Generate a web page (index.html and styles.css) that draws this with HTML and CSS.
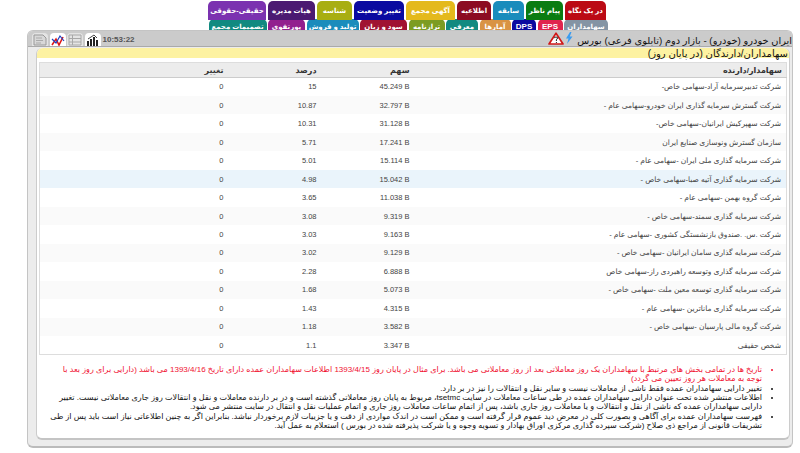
FILE: index.html
```html
<!DOCTYPE html>
<html lang="fa" dir="rtl">
<head>
<meta charset="utf-8">
<title>سهامداران</title>
<link rel="stylesheet" href="styles.css">
</head>
<body>
<nav class="tabs">
  <div class="tab-row top">
    <a class="tab w41 red">در یک نگاه</a>
    <a class="tab w37 green">پیام ناظر</a>
    <a class="tab w31 sky">سابقه</a>
    <a class="tab w34 maroon">اطلاعیه</a>
    <a class="tab w49 gold">آگهی مجمع</a>
    <a class="tab w50 navy">تغییر وضعیت</a>
    <a class="tab w35 olive">شناسه</a>
    <a class="tab w47 plum">هیات مدیره</a>
    <a class="tab w58 violet">حقیقی-حقوقی</a>
  </div>
  <div class="tab-row bottom">
    <a class="tab w44 slate">سهامداران</a>
    <a class="tab w25 crimson latin">EPS</a>
    <a class="tab w24 navy latin">DPS</a>
    <a class="tab w31 orange">آمارها</a>
    <a class="tab w32 teal">معرفی</a>
    <a class="tab w36 moss">ترازنامه</a>
    <a class="tab w47 wine">سود و زیان</a>
    <a class="tab w52 sky">تولید و فروش</a>
    <a class="tab w37 magenta">پورتفوی</a>
    <a class="tab w58 teal">تصمیمات مجمع</a>
  </div>
</nav>
<main class="panel">
  <header class="panel-head">
    <h1 class="title">ایران خودرو (خودرو) - بازار دوم (تابلوی فرعی) بورس</h1>
    <svg class="bolt" viewBox="0 0 8 12" width="8" height="12"><path d="M5 0 1 6.500h2.500L2 12 7.500 4.500H4.800L6.500 0z" fill="#3a9cf0"/></svg>
    <svg class="warn" viewBox="0 0 16 13" width="16" height="13"><path d="M8 1.200 15 12H1z" fill="#fff" stroke="#d01818" stroke-width="1.700" stroke-linejoin="round"/><path d="M6.200 5.800Q8 4 9.800 5.800L8.400 7.800V9M8.400 10v1" fill="none" stroke="#222" stroke-width="1"/></svg>
    <div class="head-spacer"></div>
    <time class="clock">10:53:22</time>
    <div class="tools">
      <span class="tool"><svg viewBox="0 0 14 12" width="14" height="12"><path d="M1 12V7h2v5zM4 12V5h2v7zM7 12V3h2v9zM10 12V6h2v6z" fill="#222"/><path d="M2 5 5 3l3-2 3 3" fill="none" stroke="#444"/></svg></span>
      <span class="tool plain"><svg viewBox="0 0 14 12" width="14" height="12"><path d="M1 1h12v10H1zM4.500 1v10M1 4.500h12M1 8h12" fill="none" stroke="#a8a8a8"/></svg></span>
      <span class="tool"><svg viewBox="0 0 14 12" width="14" height="12"><path d="M1 11 5 5l3 6 4-8" fill="none" stroke="#e01818" stroke-width="1.600"/><path d="M1 5 5 9l4-7 4 5" fill="none" stroke="#2040c0" stroke-width="1.200"/></svg></span>
      <span class="tool plain"><svg viewBox="0 0 14 12" width="14" height="12"><path d="M1 1h9l3 3v7H1z" fill="#d8d8d8" stroke="#999"/><path d="M3 4h6M3 6.500h7M3 9h5" stroke="#aaa"/></svg></span>
    </div>
  </header>
  <section class="content">
    <h2 class="section-title">سهامداران/دارندگان (در پایان روز)</h2>
    <table class="holders">
      <thead>
        <tr><th class="c-name">سهامدار/دارنده</th><th class="c-num">سهم</th><th class="c-num">درصد</th><th class="c-num">تغییر</th><th class="c-empty"></th></tr>
      </thead>
      <tbody>
        <tr><td>شرکت تدبیرسرمایه آراد-سهامی خاص-</td><td class="num">45.249 B</td><td class="num">15</td><td class="num">0</td><td></td></tr>
        <tr><td>شرکت گسترش سرمایه گذاری ایران خودرو-سهامی عام -</td><td class="num">32.797 B</td><td class="num">10.87</td><td class="num">0</td><td></td></tr>
        <tr><td>شرکت سهپرکیش ایرانیان-سهامی خاص-</td><td class="num">31.128 B</td><td class="num">10.31</td><td class="num">0</td><td></td></tr>
        <tr><td>سازمان گسترش ونوسازی صنایع ایران</td><td class="num">17.241 B</td><td class="num">5.71</td><td class="num">0</td><td></td></tr>
        <tr><td>شرکت سرمایه گذاری ملی ایران -سهامی عام -</td><td class="num">15.114 B</td><td class="num">5.01</td><td class="num">0</td><td></td></tr>
        <tr class="hl"><td>شرکت سرمایه گذاری آتیه صبا-سهامی خاص -</td><td class="num">15.042 B</td><td class="num">4.98</td><td class="num">0</td><td></td></tr>
        <tr><td>شرکت گروه بهمن -سهامی عام -</td><td class="num">11.038 B</td><td class="num">3.65</td><td class="num">0</td><td></td></tr>
        <tr><td>شرکت سرمایه گذاری سمند-سهامی خاص -</td><td class="num">9.319 B</td><td class="num">3.08</td><td class="num">0</td><td></td></tr>
        <tr><td>شرکت .س. .صندوق بازنشستگی کشوری -سهامی عام -</td><td class="num">9.163 B</td><td class="num">3.03</td><td class="num">0</td><td></td></tr>
        <tr><td>شرکت سرمایه گذاری سامان ایرانیان -سهامی خاص -</td><td class="num">9.129 B</td><td class="num">3.02</td><td class="num">0</td><td></td></tr>
        <tr><td>شرکت سرمایه گذاری وتوسعه راهبردی راز-سهامی خاص</td><td class="num">6.888 B</td><td class="num">2.28</td><td class="num">0</td><td></td></tr>
        <tr><td>شرکت سرمایه گذاری توسعه معین ملت -سهامی خاص -</td><td class="num">5.073 B</td><td class="num">1.68</td><td class="num">0</td><td></td></tr>
        <tr><td>شرکت سرمایه گذاری ماناترین -سهامی عام -</td><td class="num">4.315 B</td><td class="num">1.43</td><td class="num">0</td><td></td></tr>
        <tr><td>شرکت گروه مالی پارسیان -سهامی خاص -</td><td class="num">3.582 B</td><td class="num">1.18</td><td class="num">0</td><td></td></tr>
        <tr><td>شخص حقیقی</td><td class="num">3.347 B</td><td class="num">1.1</td><td class="num">0</td><td></td></tr>
      </tbody>
    </table>
    <ul class="notes">
      <li class="alert">تاریخ ها در تمامی بخش های مرتبط با سهامداران یک روز معاملاتی بعد از روز معاملاتی می باشد. برای مثال در پایان روز 1393/4/15 اطلاعات سهامداران عمده دارای تاریخ 1393/4/16 می باشد (دارایی برای روز بعد با توجه به معاملات هر روز تعیین می گردد)</li>
      <li>تغییر دارایی سهامداران عمده فقط ناشی از معاملات نیست و سایر نقل و انتقالات را نیز در بر دارد.</li>
      <li>اطلاعات منتشر شده تحت عنوان دارایی سهامداران عمده در طی ساعات معاملات در سایت tsetmc، مربوط به پایان روز معاملاتی گذشته است و در بر دارنده معاملات و نقل و انتقالات روز جاری معاملاتی نیست. تغییر دارایی سهامداران عمده که ناشی از نقل و انتقالات و یا معاملات روز جاری باشد، پس از اتمام ساعات معاملات روز جاری و اتمام عملیات نقل و انتقال در سایت منتشر می شود.</li>
      <li>فهرست سهامداران عمده برای آگاهی و بصورت کلی در معرض دید عموم قرار گرفته است و ممکن است در اندک مواردی از دقت و یا جزییات لازم برخوردار نباشد. بنابراین اگر به چنین اطلاعاتی نیاز است باید پس از طی تشریفات قانونی از مراجع ذی صلاح (شرکت سپرده گذاری مرکزی اوراق بهادار و تسویه وجوه و یا شرکت پذیرفته شده در بورس ) استعلام به عمل آید.</li>
    </ul>
  </section>
</main>
</body>
</html>
```
FILE: styles.css
```css
* { box-sizing: border-box; }
html, body { margin: 0; padding: 0; }
body {
  width: 800px;
  height: 453px;
  overflow: hidden;
  background: #fff;
  color: #333;
  font-family: "Liberation Sans", "DejaVu Sans", sans-serif;
  font-size: 8px;
}

/* tabs */
.tabs { height: 30px; overflow: hidden; padding-top: 1px; }
.tab-row { display: flex; gap: 2px; }
.tab-row.top { padding-right: 194px; height: 18px; position: relative; z-index: 1; }
.tab-row.bottom { padding-right: 192px; gap: 1.500px; }
.tab {
  display: flex;
  align-items: center;
  justify-content: center;
  flex: none;
  color: #fff;
  border-radius: 5px 5px 0 0;
  white-space: nowrap;
  font-size: 7px;
  font-weight: bold;
}
.top .tab { height: 19px; }
.bottom .tab { height: 15px; }
.latin { font-size: 8px; }
.w24 { width: 24px; } .w25 { width: 25px; } .w31 { width: 31px; } .w32 { width: 32px; }
.w34 { width: 34px; } .w35 { width: 35px; } .w36 { width: 36px; } .w37 { width: 37px; }
.w41 { width: 41px; } .w44 { width: 44px; } .w47 { width: 47px; } .w49 { width: 49px; }
.w50 { width: 50px; } .w52 { width: 52px; } .w58 { width: 58px; }
.red { background: #bb0a14; }
.green { background: #0a7c12; }
.sky { background: #1a8cbc; }
.maroon { background: #8c0c22; }
.gold { background: #e4b91c; }
.navy { background: #0a0aa0; }
.olive { background: #a8ae12; }
.plum { background: #4b1a72; }
.violet { background: #7b32b0; }
.slate { background: #8494a4; }
.crimson { background: #e0244e; }
.orange { background: #d99343; }
.teal { background: #118a80; }
.moss { background: #7c9c22; }
.wine { background: #a01232; }
.magenta { background: #92208e; }

/* panel */
.panel {
  height: 418px;
  margin: 0 7px 0 27px;
  padding-bottom: 6px;
  display: flex;
  flex-direction: column;
  background: #ececec;
  border: 1px solid #c4c4c4;
  border-bottom: 2px solid #bbb;
  border-radius: 6px;
}
.panel-head {
  display: flex;
  align-items: center;
  flex: none;
  height: 16px;
  margin-bottom: 1px;
  padding: 2px 0 0 4px;
  background: #cbcbcb;
  border-radius: 5px 5px 0 0;
  border-bottom: 1px solid #aaa;
}
.title { margin: 0; padding-top: 2px; font-size: 9.800px; font-weight: normal; color: #111; white-space: nowrap; line-height: 12px; }
.bolt { margin-right: 4px; align-self: flex-start; margin-top: -1px; }
.warn { margin-right: 1px; align-self: flex-start; margin-top: -1px; }
.head-spacer { flex: 1; }
.clock { direction: ltr; font-size: 8px; font-weight: bold; color: #555; margin-left: 2px; }
.tools { display: flex; align-items: flex-end; gap: 1.500px; align-self: flex-end; }
.tool {
  display: flex;
  align-items: center;
  justify-content: center;
  width: 16px;
  height: 13px;
  background: #fff;
  border-radius: 4px 4px 0 0;
}
.tool.plain { background: #e4e4e4; }

/* content */
.content {
  flex: 1;
  margin: 0 2px 0 8px;
  background: #fff;
  border: 1px solid #ccc;
  border-top: 0;
  border-bottom: 2px solid #c4c4c4;
  border-radius: 6px;
  display: flex;
  flex-direction: column;
}
.section-title {
  margin: 0;
  height: 10px;
  line-height: 12px;
  padding-right: 1px;
  font-size: 10px;
  font-weight: normal;
  color: #111;
  background: #fdf2a2;
  border-radius: 6px 6px 0 0;
  white-space: nowrap;
}
.holders {
  margin: 4px 2px 0;
  width: 748px;
  flex: none;
  border-collapse: collapse;
  table-layout: fixed;
  border: 1px solid #ddd;
  font-size: 7.500px;
}
.holders th {
  height: 15px;
  padding: 0 4px 0 2px;
  text-align: right;
  font-size: 8px;
  font-weight: bold;
  color: #333;
  background: #ececec;
  border-bottom: 1px solid #ccc;
}
.c-name { width: 375px; }
.c-num { width: 93px; }
.holders th.c-num { padding-right: 2px; }
.holders td {
  height: 18.470px;
  padding: 0 5px 0 2px;
  white-space: nowrap;
  color: #444;
}
.holders tbody tr:nth-child(even) td { background: #fafafa; }
.holders tbody tr.hl td { background: #eaf4fb; }
.holders td.num { direction: ltr; text-align: right; padding: 0 2px 0 5px; }
.notes {
  margin: 10px 0 0;
  padding: 0 27px 0 11px;
  font-size: 8px;
  line-height: 9.300px;
  color: #111;
}
.alert { color: #f01030; }
```
